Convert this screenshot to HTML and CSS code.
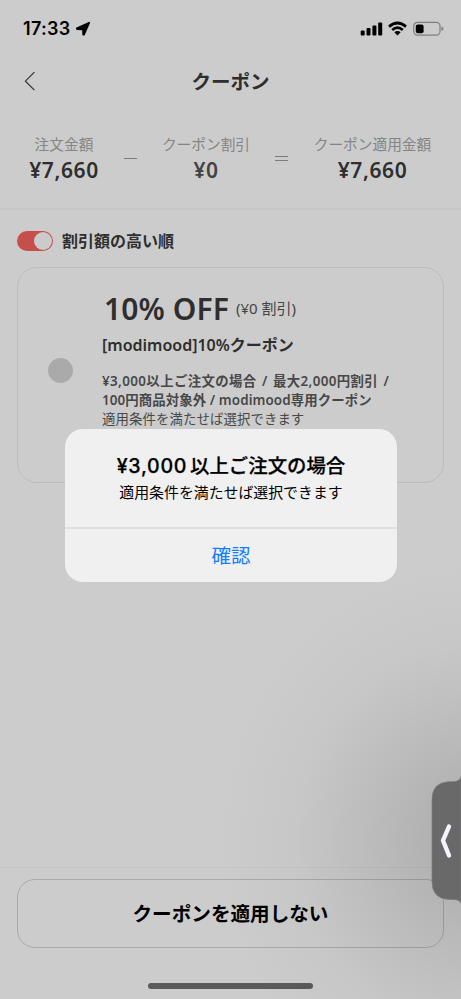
FILE: index.html
```html
<!DOCTYPE html>
<html lang="ja">
<head>
<meta charset="utf-8">
<title>クーポン</title>
<link rel="stylesheet" href="styles.css">
</head>
<body>
<div class="screen">
  <div class="status">
    <span class="time">17:33</span>
    <svg class="loc" width="16" height="16" viewBox="0 0 16 16"><path d="M14.2 1.7 9 13.7 8.2 13.6 8 8.4 2 8.1 1.8 7.3Z" fill="#000" stroke="#000" stroke-width="1.7" stroke-linejoin="round"/></svg>
    <svg class="indicators" width="84" height="16" viewBox="0 0 84 16">
      <rect x="0.7" y="9.5" width="4" height="5" rx="1"/><rect x="6.5" y="7" width="4" height="7.5" rx="1"/><rect x="12.4" y="4.5" width="4" height="10" rx="1"/><rect x="18.2" y="1.5" width="4" height="13" rx="1"/>
      <g fill="none" stroke="#000" stroke-width="2.7"><path d="M29 5.6 Q37.5 -1.6 46 5.6"/><path d="M32.2 9 Q37.5 4.4 42.8 9"/></g>
      <path d="M34.3 11.3 Q37.5 8.8 40.7 11.3 L37.5 14.4Z"/>
      <rect x="53.8" y="1.4" width="26.2" height="12.8" rx="3.6" fill="none" stroke="#7f7f7f" stroke-width="1.2"/>
      <rect x="55.8" y="3.4" width="7.8" height="8.8" rx="2"/>
      <path d="M81.5 5.5 Q83.5 6 83.5 7.8 Q83.5 9.5 81.5 10Z" fill="#7f7f7f"/>
    </svg>
  </div>
  <header class="header">
    <svg width="12" height="20" viewBox="0 0 12 20"><path d="M10.4 1.2 1.4 10.2 10.4 19.2" fill="none" stroke="#333" stroke-width="1.2"/></svg>
    <h1>クーポン</h1>
  </header>
  <section class="summary">
    <div class="amount first"><span class="label">注文金額</span><span class="value">¥7,660</span></div>
    <i class="minus"></i>
    <div class="amount second"><span class="label">クーポン割引</span><span class="value muted">¥0</span></div>
    <i class="equals"></i>
    <div class="amount third"><span class="label">クーポン適用金額</span><span class="value">¥7,660</span></div>
  </section>
  <main class="content">
    <div class="sort"><span class="toggle"></span><span class="sort-label">割引額の高い順</span></div>
    <article class="coupon">
      <span class="radio"></span>
      <div class="details">
        <div class="offer"><strong>10% OFF</strong><span>(¥0 割引)</span></div>
        <div class="name">[modimood]10%クーポン</div>
        <div class="terms"><p class="t1">¥3,000以上ご注文の場合 / 最大2,000円割引 /</p><p class="t2">100円商品対象外 / modimood専用クーポン</p><p class="t3">適用条件を満たせば選択できます</p></div>
      </div>
    </article>
  </main>
  <footer class="footer">
    <button class="skip"><span>クーポンを適用しない</span></button>
    <div class="home"></div>
  </footer>
  <div class="shade"></div>
  <div class="drawer">
    <svg width="30" height="128" viewBox="0 0 30 128"><path d="M30 .5 Q29 5.5 22 5.7 H17.5 Q1 6.5 1 23.5 V105.5 Q1 122.5 17.5 123.5 H22 Q29 123.5 30 127.5Z" fill="#696969" stroke="#7b7b7b" stroke-width=".7"/><path d="M18 50.8 12 64.8 18 79.8" transform="translate(0 -.3)" fill="none" stroke="#f5f4fc" stroke-width="4.4" stroke-linecap="round" stroke-linejoin="round"/></svg>
  </div>
  <div class="dialog" role="dialog">
    <div class="message"><h2><span class="price">¥3,000</span>以上ご注文の場合</h2><p>適用条件を満たせば選択できます</p></div>
    <button class="confirm">確認</button>
  </div>
</div>
</body>
</html>
```
FILE: styles.css
```css
* { box-sizing: border-box; margin: 0; padding: 0; }
body { font-family: "Noto Sans", "Noto Sans CJK JP", sans-serif; background: #cccccc; color: #2e2e2e; }
.screen { position: relative; display: flex; flex-direction: column; width: 461px; height: 999px; overflow: hidden; white-space: nowrap; }
.status { display: flex; align-items: center; height: 56px; padding: 1px 17px 0 23px; }
.time { font: 600 18px/24px Inter, sans-serif; color: #000; letter-spacing: .3px; }
.loc { margin-left: 4px; }
.indicators { margin-left: auto; }
.header { display: flex; align-items: center; height: 50px; padding-left: 24px; }
.header h1 { flex: 1; margin-right: 36px; padding-top: 1px; text-align: center; font-size: 19.5px; font-weight: 700; line-height: 28px; }
.summary { display: flex; height: 104px; padding-top: 26px; border-bottom: 2px solid #c6c6c6; }
.amount { display: flex; flex-direction: column; align-items: center; }
.first { width: 128px; }
.second { width: 156px; }
.third { width: 177px; }
.minus, .equals { flex: none; width: 13px; height: 6px; margin-top: 26px; border-top: 1px solid #7c7c7c; }
.minus { margin-left: -4px; margin-right: -9px; }
.equals { height: 5px; margin-top: 24px; margin-left: -9px; margin-right: -4px; border-bottom: 1px solid #7c7c7c; }
.label { font-size: 14.7px; line-height: 24px; color: #858585; }
.value { font-size: 21px; font-weight: 600; line-height: 28px; letter-spacing: .6px; }
.muted { color: #444; }
.content { flex: 1; padding: 21px 17px 0; }
.sort { display: flex; align-items: center; gap: 9px; height: 20px; }
.toggle { width: 36px; height: 20px; padding: 1px; border-radius: 10px; background: #c64e4c; }
.toggle::after { content: ""; display: block; width: 18px; height: 18px; margin-left: 16px; border-radius: 50%; background: #cbcbcb; }
.sort-label { font-size: 16px; font-weight: 700; line-height: 20px; }
.coupon { display: flex; width: 427px; height: 216px; margin-top: 16px; border: 1px solid #bcbcbc; border-radius: 20px; }
.radio { width: 25px; height: 25px; margin: 90px 0 0 30px; border-radius: 50%; background: #aaa; }
.details { margin-left: 29px; padding-top: 22px; }
.offer { display: flex; align-items: center; gap: 7px; height: 38px; padding-left: 2px; }
.offer strong { font-size: 30px; font-weight: 600; line-height: 38px; letter-spacing: .1px; }
.offer span { font-size: 15px; line-height: 20px; color: #444; padding-bottom: 2px; }
.name { margin-top: 5px; font-size: 16px; font-weight: 600; line-height: 24px; }
.terms { margin-top: 15px; font-size: 13.4px; font-weight: 600; line-height: 19px; color: #484848; }
.terms .t1 { letter-spacing: .39px; word-spacing: 1.4px; }
.terms .t2 { letter-spacing: .1px; }
.terms .t3 { font-weight: 400; letter-spacing: .1px; }
.footer { height: 132px; padding: 11px 17px 0; border-top: 1px solid #c5c5c5; }
.skip { display: block; width: 427px; height: 69px; background: transparent; border: 1px solid #aaa; border-radius: 18px; font: 700 19.6px/28px "Noto Sans", "Noto Sans CJK JP", sans-serif; color: #000; }
.home { width: 165px; height: 6px; margin: 35px 0 0 131px; border-radius: 3px; background: #5a5a5a; }
.shade { position: absolute; inset: 540px 0 0 160px; background: radial-gradient(ellipse 260px 280px at 316px 300px, rgba(0,0,0,.17), rgba(0,0,0,.09) 36%, rgba(0,0,0,.025) 70%, transparent); }
.drawer { position: absolute; right: 0; top: 776px; width: 30px; height: 128px; }
.drawer svg { display: block; }
.dialog { position: absolute; left: 65px; top: 429px; width: 332px; height: 153px; border-radius: 18px; background: #f0f0f0; overflow: hidden; text-align: center; color: #000; }
.message { height: 100px; padding-top: 22px; border-bottom: 2px solid #e0e0e0; }
.message h2 { font-size: 19.4px; font-weight: 500; font-family: "Noto Sans CJK JP", sans-serif; line-height: 28px; -webkit-text-stroke: .25px #000; }
.price { font: 500 19.6px/28px Inter, sans-serif; margin-right: 3px; letter-spacing: .7px; }
.message p { font-size: 14.9px; line-height: 24px; font-family: "Noto Sans CJK JP", sans-serif; font-weight: 400; }
.confirm { display: block; width: 100%; height: 52px; border: 0; background: transparent; color: #147efb; font: 400 19.5px/28px "Noto Sans CJK JP", sans-serif; }
```
